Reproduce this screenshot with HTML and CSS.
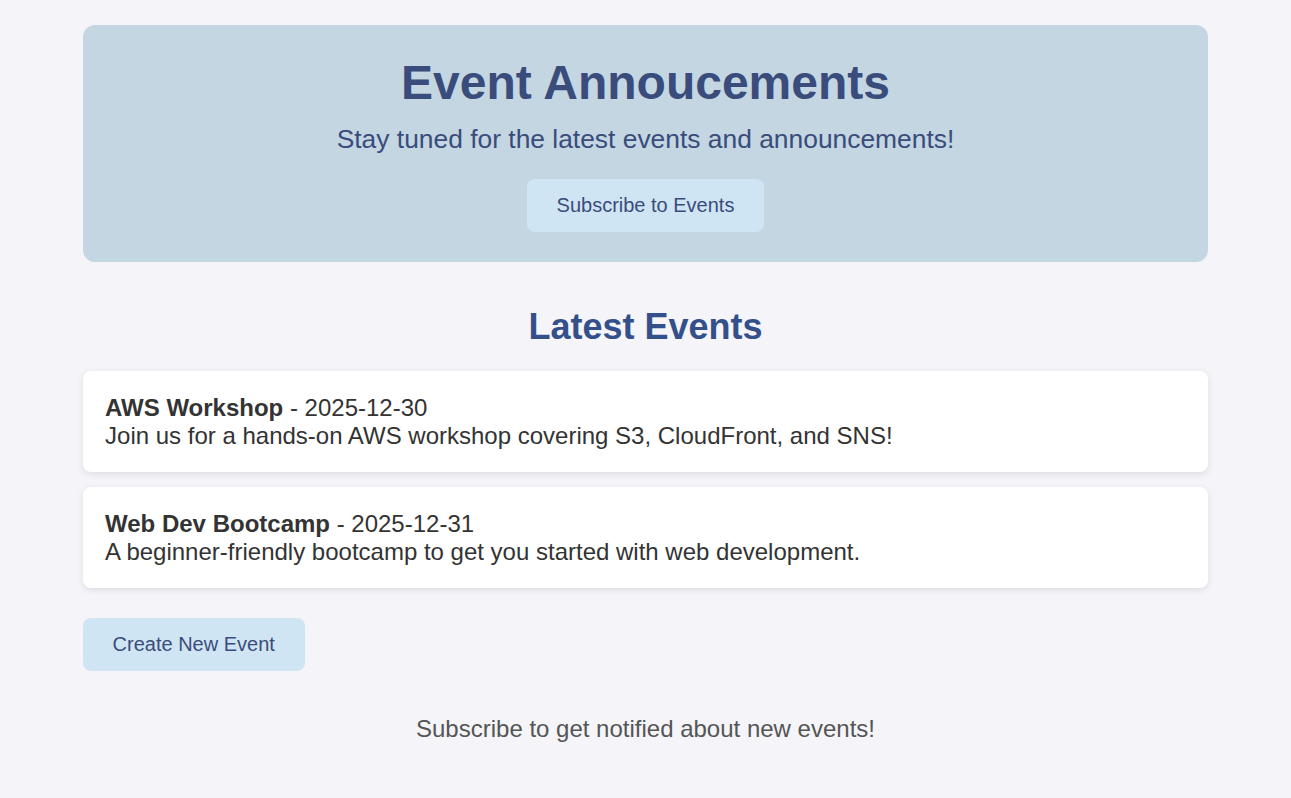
FILE: index.html
```html
<!DOCTYPE html>
<html lang="en">
<head>
<meta charset="utf-8">
<title>Event Annoucements</title>
<link rel="stylesheet" href="styles.css">
</head>
<body>
<div class="page">
  <header class="hero">
    <h1 class="hero-title">Event Annoucements</h1>
    <p class="hero-sub">Stay tuned for the latest events and announcements!</p>
    <button class="btn">Subscribe to Events</button>
  </header>

  <section class="events">
    <h2 class="events-title">Latest Events</h2>
    <div class="event-list">
      <div class="event-card">
        <div><strong>AWS Workshop</strong> - 2025-12-30</div>
        <div>Join us for a hands-on AWS workshop covering S3, CloudFront, and SNS!</div>
      </div>
      <div class="event-card">
        <div><strong>Web Dev Bootcamp</strong> - 2025-12-31</div>
        <div>A beginner-friendly bootcamp to get you started with web development.</div>
      </div>
    </div>
    <div class="actions">
      <button class="btn">Create New Event</button>
    </div>
  </section>

  <p class="footer-note">Subscribe to get notified about new events!</p>
</div>
</body>
</html>
```

FILE: styles.css
```css
html, body {
  margin: 0;
  padding: 0;
}

body {
  background: #f4f4f9;
  font-family: "Liberation Sans", Arial, sans-serif;
  font-size: 24px;
  color: #333;
  padding: 25px 20px 20px;
}

.page {
  width: 90%;
  margin: 0 auto;
}

.hero {
  background: #c3d6e2;
  border-radius: 12px;
  padding: 30px 20px;
  text-align: center;
}

.hero-title {
  margin: 0;
  font-size: 48px;
  font-weight: bold;
  color: #3a4c7b;
}

.hero-sub {
  margin: 14px 0 24px;
  font-size: 26.4px;
  color: #3a4c7b;
}

.btn {
  font-family: "Liberation Sans", Arial, sans-serif;
  font-size: 20px;
  padding: 15px 30px;
  border: none;
  border-radius: 8px;
  background: #d0e5f3;
  color: #3a4c7b;
  cursor: pointer;
}

.events-title {
  margin: 44px 0 23px;
  text-align: center;
  font-size: 36px;
  font-weight: bold;
  color: #34508a;
}

.event-list {
  display: flex;
  flex-direction: column;
  gap: 15px;
}

.event-card {
  background: #fff;
  border-radius: 8px;
  padding: 22.5px;
  box-shadow: 0 2px 7px rgba(0, 0, 0, 0.1);
}

.actions {
  margin-top: 30px;
}

.footer-note {
  margin: 44px 0 0;
  text-align: center;
  color: #555;
}
```
